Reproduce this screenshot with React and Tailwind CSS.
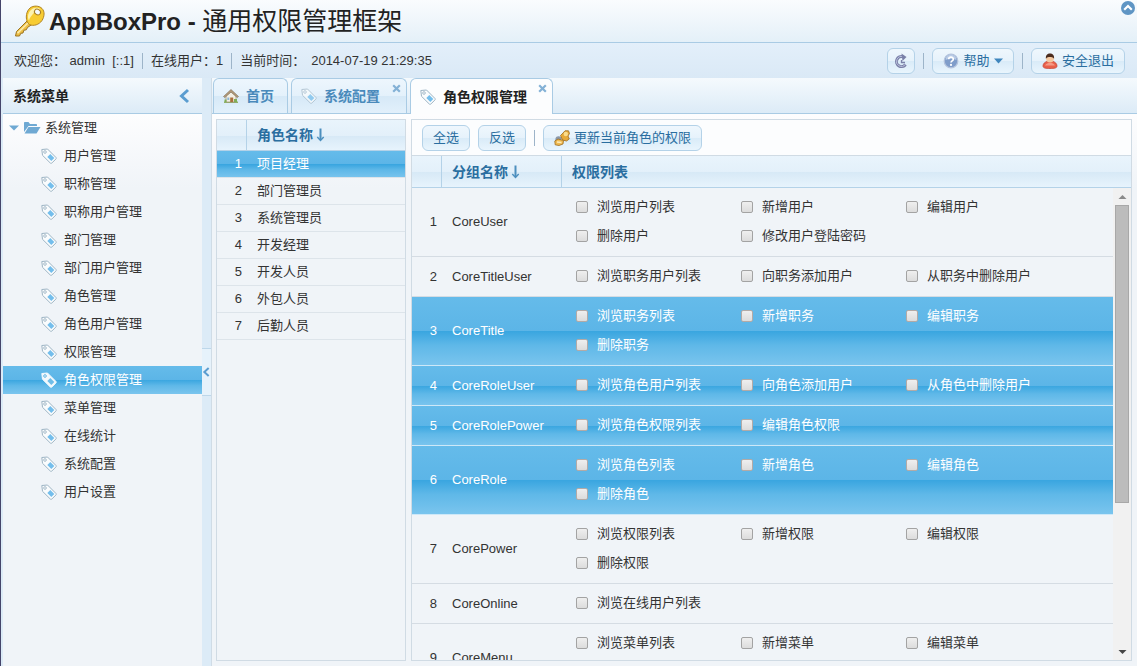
import { useState } from "react";

const menu = [
  "用户管理", "职称管理", "职称用户管理", "部门管理", "部门用户管理", "角色管理", "角色用户管理",
  "权限管理", "角色权限管理", "菜单管理", "在线统计", "系统配置", "用户设置",
];

const roles = ["项目经理", "部门管理员", "系统管理员", "开发经理", "开发人员", "外包人员", "后勤人员"];

const groups = [
  { name: "CoreUser", powers: ["浏览用户列表", "新增用户", "编辑用户", "删除用户", "修改用户登陆密码"] },
  { name: "CoreTitleUser", powers: ["浏览职务用户列表", "向职务添加用户", "从职务中删除用户"] },
  { name: "CoreTitle", selected: true, powers: ["浏览职务列表", "新增职务", "编辑职务", "删除职务"] },
  { name: "CoreRoleUser", selected: true, powers: ["浏览角色用户列表", "向角色添加用户", "从角色中删除用户"] },
  { name: "CoreRolePower", selected: true, powers: ["浏览角色权限列表", "编辑角色权限"] },
  { name: "CoreRole", selected: true, powers: ["浏览角色列表", "新增角色", "编辑角色", "删除角色"] },
  { name: "CorePower", powers: ["浏览权限列表", "新增权限", "编辑权限", "删除权限"] },
  { name: "CoreOnline", powers: ["浏览在线用户列表"] },
  { name: "CoreMenu", powers: ["浏览菜单列表", "新增菜单", "编辑菜单", "删除菜单"] },
];

const selectedBg = "bg-[linear-gradient(#65bbea_0%,#5cb5e7_49%,#3aa6e0_50%,#5fb8e8_70%,#7bc5ee_100%)]";
const headerBg = "bg-[linear-gradient(#e9f4fc_0%,#e3f0fa_50%,#d7e9f6_51%,#e8f4fd_100%)]";

function KeyIcon() {
  return (
    <svg className="size-8 shrink-0" viewBox="0 0 32 32" aria-hidden="true">
      <path d="M14 15 L2.500 26.500 L1.500 31 L5.500 31 L6.800 28.300 L9 28 L9.800 25.300 L12.300 24.800 L13.500 22.500 L18.500 19 Z" fill="#edbf45" stroke="#9c7420" strokeWidth="1" strokeLinejoin="round" />
      <path d="M15 17 L3.500 28.300" stroke="#fcedae" strokeWidth="1.600" />
      <path d="M16 3 C19.500 0.300 25 0.500 28 3.500 C31 6.500 30.500 11.500 28 15.500 C25 19.800 19.500 21.500 15.500 19.500 C11.500 17 10.800 7.500 16 3 Z" fill="#f7cc33" stroke="#b08526" strokeWidth="1" />
      <path d="M17 5 C19.500 2.300 24 2.200 26.500 4.200 C22 5.500 16.500 10 15 15.500 C13 12 14 7.800 17 5 Z" fill="#fdf2ae" />
      <ellipse cx="23.500" cy="7" rx="3.200" ry="2.700" transform="rotate(35 23.500 7)" fill="#f4f9fd" stroke="#a87f24" strokeWidth="1" />
    </svg>
  );
}

function TagIcon({ active, className = "" }) {
  const line = active ? "#f2f9fd" : "#9db4c4";
  const fill = active ? "#f2f9fd" : "#fafcfd";
  const mark = active ? "#6fbde8" : "#74beec";
  return (
    <svg className={"size-4 shrink-0 " + className} viewBox="0 0 16 16" aria-hidden="true">
      <path d="M0.800 1.500 L6.500 1 L14.800 9.300 C15.400 9.900 15.400 10.500 14.800 11.100 L11 14.900 C10.400 15.500 9.800 15.500 9.200 14.900 L1.500 7.300 Z" fill={fill} stroke={line} strokeWidth="1" strokeLinejoin="round" />
      <circle cx="4" cy="4" r="1.300" fill="#fff" stroke={active ? "#4fabdf" : line} strokeWidth="0.900" />
      <path d="M9.300 6 L13.300 10 L10.300 13 L6.300 9 Z" fill={mark} />
    </svg>
  );
}

function HomeIcon() {
  return (
    <svg className="size-4 shrink-0" viewBox="0 0 16 16" aria-hidden="true">
      <path d="M1 13.500 H15 V15 H1 Z" fill="#8fb068" />
      <path d="M3 8 L8 3.500 L13 8 V14 H3 Z" fill="#f3efe4" stroke="#a3977d" strokeWidth="0.800" />
      <path d="M0.500 8.500 L8 1.500 L15.500 8.500 L14.300 9.600 L8 4 L1.700 9.600 Z" fill="#b49b79" stroke="#7b6a54" strokeWidth="0.600" />
      <rect x="7.200" y="9.500" width="3" height="4.500" fill="#a9703c" />
      <rect x="4.300" y="9.500" width="2" height="2.500" fill="#8db7d6" />
      <path d="M11 11 h3 v3 h-3 z" fill="#7fae57" />
      <path d="M1.500 11.500 h2 v2.500 h-2 z" fill="#7fae57" />
    </svg>
  );
}

function FolderIcon() {
  return (
    <svg className="h-4 w-[18px] shrink-0" viewBox="0 0 18 16" aria-hidden="true">
      <path d="M1 3 C1 2.400 1.400 2 2 2 H5.500 L7 4 H13 C13.600 4 14 4.400 14 5 V6 H5.500 L1 12 Z" fill="#6fa9d3" />
      <path d="M5.500 7 H17.500 L13.500 13.500 H1.500 Z" fill="#6fa9d3" />
    </svg>
  );
}

function RefreshIcon() {
  return (
    <svg className="size-4" viewBox="0 0 16 16" aria-hidden="true">
      <path d="M12.500 11.500 A5 5 0 1 1 10 3.800" fill="none" stroke="#7a80a8" strokeWidth="3" />
      <path d="M12.500 11.500 A5 5 0 1 1 10 3.800" fill="none" stroke="#b9bfdc" strokeWidth="1" />
      <path d="M8.500 0.500 L13.500 4 L9.500 8 Z" fill="#7a80a8" />
      <path d="M12 9.500 H8.500 V7" fill="none" stroke="#7a80a8" strokeWidth="1.300" />
    </svg>
  );
}

function HelpIcon() {
  return (
    <svg className="size-4" viewBox="0 0 16 16" aria-hidden="true">
      <circle cx="8" cy="8" r="6.800" fill="#7f9dca" stroke="#b4c3dc" strokeWidth="1.200" />
      <path d="M2.500 7 A5.500 5.500 0 0 1 13.500 7 Q8 4.500 2.500 7 Z" fill="#b9cbe6" />
      <path d="M5.700 6.300 C5.700 3.400 10.300 3.400 10.300 6.200 C10.300 7.900 8 7.900 8 9.600" fill="none" stroke="#fff" strokeWidth="1.700" />
      <circle cx="8" cy="11.900" r="1.100" fill="#fff" />
    </svg>
  );
}

function UserIcon() {
  return (
    <svg className="size-4" viewBox="0 0 16 16" aria-hidden="true">
      <path d="M1 13 C1 10 4 8 8 8 C12 8 15 10 15 13 C15 15.300 12 15.500 8 15.500 C4 15.500 1 15.300 1 13 Z" fill="#e9604a" stroke="#c24433" strokeWidth="0.700" />
      <path d="M3 12.500 C4 10.500 6 10 8 10 C10 10 12 10.500 13 12.500 Z" fill="#f59a85" />
      <circle cx="8" cy="5.500" r="3.900" fill="#f4c9a1" />
      <path d="M3.900 5.800 C3.500 2 5.500 0.600 8 0.600 C10.500 0.600 12.500 2 12.100 5.800 C11 3.800 9 4.200 8 4 C6.500 4.200 5 3.800 3.900 5.800 Z" fill="#4b2c1e" />
    </svg>
  );
}

function UpdateIcon() {
  return (
    <svg className="size-4" viewBox="0 0 16 16" aria-hidden="true">
      <path d="M1.500 8.500 C2 5.500 6 5.500 7.500 8 L7 12 H1 Z" fill="#8b98a9" />
      <path d="M6.500 5.500 L9 3 L11 0.800 H14.500 L15.500 3.500 L14 6 L15.300 9 L12.500 11 L8.500 10 Z" fill="#e6a939" stroke="#9d6c1d" strokeWidth="0.800" />
      <circle cx="11.800" cy="4" r="2.200" fill="#fbdc8a" />
      <path d="M0.800 11 L4 9 L9.500 10.500 L9 14 L5 15.500 L1.200 14.800 Z" fill="#f0bb52" stroke="#9d6c1d" strokeWidth="0.800" />
      <path d="M3 12 L7.500 12.500" stroke="#fdeab6" strokeWidth="1.400" />
    </svg>
  );
}

function SortArrow() {
  return (
    <svg className="h-4 w-[9px]" viewBox="0 0 9 16" aria-hidden="true">
      <path d="M4.500 1.500 V13" stroke="#4c8fbe" strokeWidth="2" />
      <path d="M1.300 10 L4.500 13.500 L7.700 10" fill="none" stroke="#4c8fbe" strokeWidth="1.400" />
    </svg>
  );
}

function Chevron({ className, width = 2 }) {
  return (
    <svg className={className} viewBox="0 0 12 16" aria-hidden="true">
      <path d="M10 2 L3.500 8 L10 14" fill="none" stroke="#5b9dd0" strokeWidth={width} />
    </svg>
  );
}

function TabClose({ label }) {
  return (
    <button type="button" aria-label={"关闭" + label} className="absolute top-[5px] right-[5px]">
      <svg className="size-[9px]" viewBox="0 0 9 9" aria-hidden="true">
        <path d="M1.200 1.200 L7.800 7.800 M7.800 1.200 L1.200 7.800" stroke="#83b1d6" strokeWidth="2.200" />
      </svg>
    </button>
  );
}

function Button({ children, className = "", ...rest }) {
  return (
    <button
      type="button"
      className={"flex h-[26px] items-center justify-center gap-1 rounded-md border border-[#b4d2e8] bg-[linear-gradient(#eff7fd_0%,#e6f2fb_50%,#d9ebf8_51%,#e9f5fd_100%)] text-[13px] leading-4 text-[#2a6ea0] " + className}
      {...rest}
    >
      {children}
    </button>
  );
}

function Divider() {
  return <span className="mx-2 h-4 w-px bg-[#9db4c9]" />;
}

function Power({ id, label, selected }) {
  const [checked, setChecked] = useState(false);
  return (
    <label htmlFor={id} className="flex h-[29px] items-center gap-[9px]">
      <input
        id={id}
        type="checkbox"
        checked={checked}
        onChange={(e) => setChecked(e.target.checked)}
        className={
          "size-3 appearance-none rounded-[2px] border bg-[linear-gradient(#efefef,#dcdcdc)] checked:bg-none checked:bg-[#4c8fbe] " +
          (selected ? "border-[#b3aaa6]" : "border-[#a3a3a3]")
        }
      />
      <span>{label}</span>
    </label>
  );
}

function Tab({ icon, label, active, closable, className }) {
  return (
    <div
      className={
        "relative flex items-center rounded-t-md border border-b-0 border-[#a9cbe4] pl-[9px] " +
        (active
          ? "h-9 bg-[#fcfdfe] "
          : "h-[35px] bg-[linear-gradient(#edf6fd_0%,#e4f1fb_50%,#d6e9f7_51%,#e2f0fb_100%)] ") +
        className
      }
    >
      <button type="button" role="tab" aria-selected={!!active} className={"flex items-center gap-[7px] text-[14px] leading-4 font-bold " + (active ? "text-[#222]" : "text-[#4a8abb]")}>
        {icon}
        {label}
      </button>
      {closable && <TabClose label={label} />}
    </div>
  );
}

function PowerColumns() {
  return (
    <colgroup>
      <col className="w-[30px]" />
      <col className="w-[120px]" />
      <col />
    </colgroup>
  );
}

export default function App() {
  return (
    <div className="flex h-screen flex-col overflow-hidden border-l border-[#45456a] bg-[#dcebf7] font-['Liberation_Sans','Noto_Sans_CJK_SC',sans-serif] text-[13px] leading-4 text-[#333]">
      <header className="relative flex h-[43px] shrink-0 items-center gap-[3px] border-b border-[#a9cbe4] bg-[linear-gradient(#fafcfe,#e4f0f8)] pl-[13px]">
        <KeyIcon />
        <h1 className="text-[24px] leading-8 font-bold text-[#222]">
          AppBoxPro - <span className="text-[25px] font-normal">通用权限管理框架</span>
        </h1>
        <button type="button" aria-label="折叠" className="absolute top-px right-[2px]">
          <svg className="size-[14px]" viewBox="0 0 14 14" aria-hidden="true">
            <circle cx="7" cy="7" r="7" fill="#5f95c4" />
            <path d="M3.200 8.800 L7 5 L10.800 8.800" fill="none" stroke="#fff" strokeWidth="2.200" />
          </svg>
        </button>
      </header>

      <div className="flex h-[35px] shrink-0 items-center bg-[linear-gradient(#e3effa,#dae9f6)] pr-3 pl-[13px]">
        <span>欢迎您：&nbsp;admin&nbsp; [::1]</span>
        <Divider />
        <span>在线用户：1</span>
        <Divider />
        <span>当前时间：</span>
        <span className="ml-[6px]">2014-07-19 21:29:35</span>
        <div className="ml-auto flex items-center">
          <Button className="w-7" aria-label="刷新"><RefreshIcon /></Button>
          <Divider />
          <Button className="w-[82px]">
            <HelpIcon />
            帮助
            <svg className="h-[6px] w-[9px]" viewBox="0 0 9 6" aria-hidden="true"><path d="M0 0.500 H9 L4.500 5.500 Z" fill="#3f86bd" /></svg>
          </Button>
          <Divider />
          <Button className="w-[94px]"><UserIcon />安全退出</Button>
        </div>
      </div>

      <div className="flex min-h-0 flex-1 pl-[2px]">
        <nav className="flex w-[199px] shrink-0 flex-col bg-[linear-gradient(#fdfdfe_36px,#f0f4f8_110px)]">
          <div className="flex h-9 shrink-0 items-center justify-between border-b border-[#a9cbe4] bg-[linear-gradient(#f5fafd,#dcebf7)] pr-3 pl-[10px]">
            <h2 className="text-[14px] font-bold text-[#222]">系统菜单</h2>
            <button type="button" aria-label="收起菜单"><Chevron className="h-4 w-3" width={3} /></button>
          </div>
          <div className="flex h-7 shrink-0 items-center gap-1 pl-[6px]">
            <svg className="h-[6px] w-[10px]" viewBox="0 0 10 6" aria-hidden="true"><path d="M0 0.500 H10 L5 5.500 Z" fill="#6fa9d3" /></svg>
            <FolderIcon />
            <span>系统管理</span>
          </div>
          <ul>
            {menu.map((item) => {
              const active = item === "角色权限管理";
              return (
                <li key={item}>
                  <a href="#" className={"flex h-7 items-center gap-[7px] pl-[38px] " + (active ? selectedBg + " text-white" : "")}>
                    <TagIcon active={active} />
                    {item}
                  </a>
                </li>
              );
            })}
          </ul>
        </nav>

        <div className="flex w-[9px] shrink-0 flex-col justify-center">
          <button type="button" aria-label="折叠侧栏" className="flex h-12 w-full items-center border-y border-[#bdd7ea] bg-[#e6f2fb]">
            <Chevron className="h-3 w-2" width={3} />
          </button>
        </div>

        <main className="flex min-w-0 flex-1 flex-col border-l border-[#d0dce6] bg-[linear-gradient(#fdfdfe_36px,#f0f4f8_110px)]">
          <div role="tablist" className="flex h-9 shrink-0 items-start gap-[3px] border-b border-[#a9cbe4] bg-[linear-gradient(#f5fafd,#dcebf7)] pl-px">
            <Tab className="w-[75px]" icon={<HomeIcon />} label="首页" />
            <Tab className="w-[116px]" icon={<TagIcon className="opacity-70" />} label="系统配置" closable />
            <Tab className="w-[143px]" icon={<TagIcon />} label="角色权限管理" active closable />
          </div>

          <div className="flex min-h-0 flex-1 gap-[5px] p-[5px] pl-1">
            <section className="w-[190px] shrink-0 border border-[#d0dbe4]">
              <table className="w-full table-fixed border-separate border-spacing-0 text-left">
                <thead>
                  <tr className={headerBg}>
                    <th className="h-[31px] w-[30px] border-r border-b border-[#b4d2e8] p-0" aria-label="序号" />
                    <th className="h-[31px] border-b border-[#b4d2e8] p-0 pl-[10px] text-[14px] text-[#2a6ea0]">
                      <span className="flex items-center gap-[3px]">角色名称<SortArrow /></span>
                    </th>
                  </tr>
                </thead>
                <tbody>
                  {roles.map((role, i) => (
                    <tr key={role} className={i === 0 ? selectedBg + " text-white" : ""}>
                      <td className="h-[27px] border-b border-[#dde4ea] p-0 pr-[5px] text-right">{i + 1}</td>
                      <td className="h-[27px] border-b border-[#dde4ea] p-0 pl-[10px]">{role}</td>
                    </tr>
                  ))}
                </tbody>
              </table>
            </section>

            <section className="flex min-w-0 flex-1 flex-col border border-[#d0dbe4]">
              <div className="flex h-9 shrink-0 items-center border-b border-[#d0dbe4] bg-[#fcfdfe] pl-[10px]">
                <Button className="w-12">全选</Button>
                <Button className="ml-2 w-12">反选</Button>
                <Divider />
                <Button className="w-[159px]"><UpdateIcon />更新当前角色的权限</Button>
              </div>
              <table className="w-full shrink-0 table-fixed border-separate border-spacing-0 text-left text-[14px] text-[#2a6ea0]">
                <PowerColumns />
                <thead>
                  <tr className={headerBg}>
                    <th className="h-8 border-r border-b border-[#b4d2e8] p-0" aria-label="序号" />
                    <th className="border-r border-b border-[#b4d2e8] p-0 pl-[10px]">
                      <span className="flex items-center gap-[3px]">分组名称<SortArrow /></span>
                    </th>
                    <th className="border-b border-[#b4d2e8] p-0 pl-[10px]">权限列表</th>
                  </tr>
                </thead>
              </table>
              <div className="flex min-h-0 flex-1">
                <div className="min-w-0 flex-1 overflow-hidden">
                  <table className="w-full table-fixed border-separate border-spacing-0 text-left">
                    <PowerColumns />
                    <tbody>
                      {groups.map((g, i) => {
                        const line = "border-b p-0 " + (g.selected ? "border-[#cde8f8]" : "border-[#d5dce3]");
                        return (
                          <tr key={g.name} className={g.selected ? selectedBg + " text-white" : ""}>
                            <td className={line + " pr-[5px] text-right"}>{i + 1}</td>
                            <td className={line + " pl-[10px]"}>{g.name}</td>
                            <td className={line + " pt-1 pb-[6px] pl-[14px]"}>
                              <div className="grid grid-cols-[165px_165px_165px]">
                                {g.powers.map((p, j) => (
                                  <Power key={p} id={"power-" + i + "-" + j} label={p} selected={g.selected} />
                                ))}
                              </div>
                            </td>
                          </tr>
                        );
                      })}
                    </tbody>
                  </table>
                </div>
                <div className="flex w-[18px] shrink-0 flex-col items-center bg-[#f1f1f1]" aria-hidden="true">
                  <svg className="h-[17px] w-[9px]" viewBox="0 0 9 17"><path d="M0.500 11 L4.500 7 L8.500 11 Z" fill="#8a8a8a" /></svg>
                  <div className="flex w-full flex-1 flex-col px-[2px]">
                    <div className="h-[68%] border border-[#a8a8a8] bg-[#bcbcbc]" />
                  </div>
                  <svg className="h-[17px] w-[9px]" viewBox="0 0 9 17"><path d="M0.500 7 L4.500 11 L8.500 7 Z" fill="#444" /></svg>
                </div>
              </div>
            </section>
          </div>
        </main>
      </div>
    </div>
  );
}
